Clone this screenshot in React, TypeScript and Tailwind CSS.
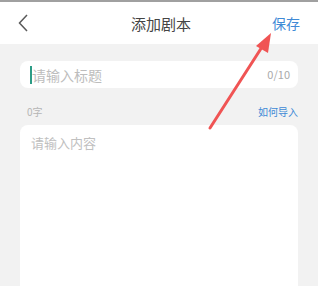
import React from "react";

export default function App() {
  const font = { fontFamily: '"Noto Sans CJK SC", "Noto Sans", sans-serif' };
  return (
    <div className="relative w-[318px] h-[286px] overflow-hidden bg-[#f2f2f2]" style={font}>
      <div className="h-[2px] bg-[#a0a0a0]" />
      <div className="h-[42px] bg-white flex items-center px-[15px]">
        <div className="w-[50px] flex items-center">
          <svg width="14" height="18" viewBox="0 0 14 18" className="ml-[2px]">
            <path d="M10 1 L2.5 9 L10 17" fill="none" stroke="#5a5a5a" strokeWidth="1.5" />
          </svg>
        </div>
        <div className="flex-1 text-center text-[15px] text-[#444444] leading-none pl-[4px]">添加剧本</div>
        <div className="w-[50px] text-right text-[14px] text-[#3f8ad6] leading-none pr-[3px]">保存</div>
      </div>
      <div className="px-5">
        <div className="mt-[17px] h-[27px] bg-white rounded-[8px] flex items-center pl-[10px] pr-[8px]">
          <div className="w-[2px] h-[18px] bg-[#2c9c86]" />
          <span className="text-[14px] text-[#bdbdbd] leading-none">请输入标题</span>
          <span className="ml-auto text-[11px] text-[#aaaaaa] leading-none">0/10</span>
        </div>
        <div className="flex justify-between items-center mt-[19px] pl-[7px]">
          <span className="text-[10px] text-[#b5b5b5] leading-none">0字</span>
          <span className="text-[10px] text-[#3f8ad6] leading-none">如何导入</span>
        </div>
        <div className="mt-[8px] h-[200px] bg-white rounded-[8px] pt-[11px] pl-[11px] text-[13px] text-[#c0c0c0] leading-none">
          请输入内容
        </div>
      </div>
      <svg className="absolute left-0 top-0 pointer-events-none" width="318" height="286">
        <line x1="210" y1="128" x2="262" y2="47" stroke="#f05454" strokeWidth="3" strokeLinecap="round" />
        <polygon points="271,33 256,46 268,53" fill="#f05454" />
      </svg>
    </div>
  );
}
